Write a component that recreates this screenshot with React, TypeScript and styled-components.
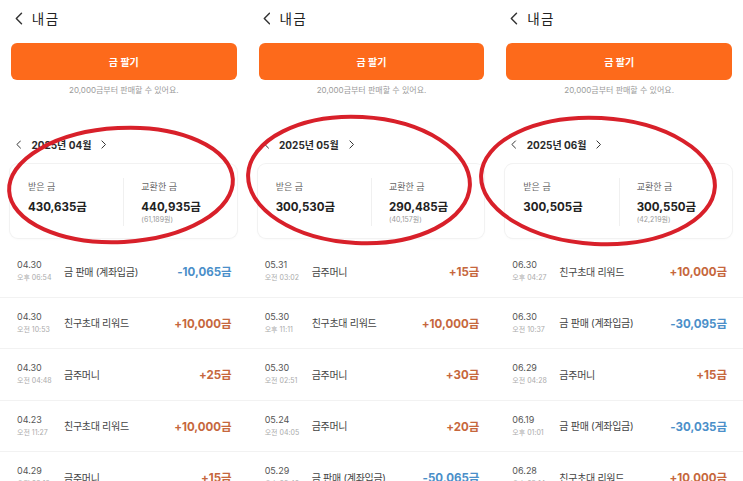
import React from "react";
import styled, { createGlobalStyle } from "styled-components";

const GlobalStyle = createGlobalStyle`
  html, body {
    margin: 0;
    padding: 0;
    background: #fff;
  }
  body {
    font-family: Inter, "Noto Sans CJK KR", sans-serif;
    color: #222;
    overflow: hidden;
  }
`;

// Layout
const Screen = styled.div`
  position: relative;
  width: 743px;
  height: 481px;
  overflow: hidden;
  display: grid;
  grid-template-columns: repeat(3, 1fr);
`;

const Panel = styled.div`
  display: flex;
  flex-direction: column;
  min-width: 0;
`;

const Header = styled.div`
  height: 36px;
  display: flex;
  align-items: center;
  gap: 9px;
  padding-left: 15px;
`;

const Title = styled.span`
  font-size: 13.5px;
  letter-spacing: 1.5px;
  color: #222;
`;

const SellButton = styled.button`
  margin: 7px 11px 0;
  height: 37px;
  border: 0;
  border-radius: 6px;
  background: #fd6a1b;
  color: #fff;
  font-family: inherit;
  font-size: 10px;
  font-weight: 700;
`;

const Hint = styled.div`
  margin-top: 5px;
  line-height: 10px;
  font-size: 8px;
  color: #9b9b9b;
  text-align: center;
`;

const MonthNav = styled.div`
  margin-top: 39px;
  height: 20px;
  display: flex;
  align-items: center;
  padding-left: 16px;
  gap: 10px;
`;

const Month = styled.span`
  font-size: 10px;
  font-weight: 700;
  color: #2a2a2a;
`;

const Card = styled.div`
  margin: 10px 11px 0 10px;
  height: 74px;
  box-sizing: border-box;
  border-radius: 8px;
  background: #fff;
  box-shadow: 0 0 0 1px #f2f2f2, 0 1px 3px rgba(0, 0, 0, 0.04);
  display: flex;
  align-items: flex-start;
  padding-top: 16px;
`;

const Col = styled.div<{ $pad: number }>`
  flex: 1;
  padding-left: ${(p) => p.$pad}px;
  display: flex;
  flex-direction: column;
`;

const Divider = styled.div`
  width: 1px;
  height: 48px;
  margin-top: -2px;
  background: #f0f0f0;
`;

const Label = styled.span`
  font-size: 9px;
  line-height: 14px;
  color: #666;
`;

const Value = styled.span`
  margin-top: 4px;
  font-size: 11.5px;
  line-height: 18px;
  font-weight: 700;
  color: #222;
`;

const Won = styled.span`
  margin-top: -1px;
  font-size: 7px;
  line-height: 10px;
  color: #999;
`;

const List = styled.div`
  margin-top: 8px;
  display: flex;
  flex-direction: column;
`;

const Row = styled.div`
  height: 51.5px;
  flex-shrink: 0;
  box-sizing: border-box;
  border-bottom: 1px solid #f2f2f2;
  display: flex;
  align-items: center;
  padding: 0 16px 0 17px;
`;

const When = styled.div`
  width: 47px;
  display: flex;
  flex-direction: column;
`;

const Day = styled.span`
  font-size: 9px;
  line-height: 13px;
  color: #555;
`;

const Time = styled.span`
  margin-top: 1px;
  font-size: 7px;
  line-height: 12px;
  color: #aaa;
`;

const What = styled.span`
  flex: 1;
  font-size: 10px;
  letter-spacing: -0.3px;
  color: #444;
`;

const Amount = styled.span<{ $minus: boolean }>`
  font-size: 11.5px;
  font-weight: 700;
  color: ${(p) => (p.$minus ? "#4b8fc9" : "#c6673d")};
`;

const Marks = styled.svg`
  position: absolute;
  inset: 0;
  pointer-events: none;
`;

const Chevron = ({ dir, size }: { dir: "l" | "r"; size: number }) => (
  <svg width={size * 0.6} height={size} viewBox="0 0 6 10">
    <polyline
      points={dir === "l" ? "5,1 1,5 5,9" : "1,1 5,5 1,9"}
      fill="none"
      stroke="#333"
      strokeWidth={1.1}
      strokeLinecap="round"
      strokeLinejoin="round"
    />
  </svg>
);

type Tx = { day: string; time: string; what: string; amount: string };

type Sheet = {
  month: string;
  got: string;
  swapped: string;
  won: string;
  rows: Tx[];
};

const sheets: Sheet[] = [
  {
    month: "2025년 04월",
    got: "430,635금",
    swapped: "440,935금",
    won: "(61,189원)",
    rows: [
      { day: "04.30", time: "오후 06:54", what: "금 판매 (계좌입금)", amount: "-10,065금" },
      { day: "04.30", time: "오전 10:53", what: "친구초대 리워드", amount: "+10,000금" },
      { day: "04.30", time: "오전 04:48", what: "금주머니", amount: "+25금" },
      { day: "04.23", time: "오전 11:27", what: "친구초대 리워드", amount: "+10,000금" },
      { day: "04.29", time: "오전 03:12", what: "금주머니", amount: "+15금" },
    ],
  },
  {
    month: "2025년 05월",
    got: "300,530금",
    swapped: "290,485금",
    won: "(40,157원)",
    rows: [
      { day: "05.31", time: "오전 03:02", what: "금주머니", amount: "+15금" },
      { day: "05.30", time: "오후 11:11", what: "친구초대 리워드", amount: "+10,000금" },
      { day: "05.30", time: "오전 02:51", what: "금주머니", amount: "+30금" },
      { day: "05.24", time: "오전 04:05", what: "금주머니", amount: "+20금" },
      { day: "05.29", time: "오후 02:40", what: "금 판매 (계좌입금)", amount: "-50,065금" },
    ],
  },
  {
    month: "2025년 06월",
    got: "300,505금",
    swapped: "300,550금",
    won: "(42,219원)",
    rows: [
      { day: "06.30", time: "오후 04:27", what: "친구초대 리워드", amount: "+10,000금" },
      { day: "06.30", time: "오전 10:37", what: "금 판매 (계좌입금)", amount: "-30,095금" },
      { day: "06.29", time: "오전 04:28", what: "금주머니", amount: "+15금" },
      { day: "06.19", time: "오후 01:01", what: "금 판매 (계좌입금)", amount: "-30,035금" },
      { day: "06.28", time: "오후 09:14", what: "친구초대 리워드", amount: "+10,000금" },
    ],
  },
];

const GoldPanel = ({ sheet }: { sheet: Sheet }) => (
  <Panel>
    <Header>
      <Chevron dir="l" size={13} />
      <Title>내금</Title>
    </Header>
    <SellButton>금 팔기</SellButton>
    <Hint>20,000금부터 판매할 수 있어요.</Hint>
    <MonthNav>
      <Chevron dir="l" size={9} />
      <Month>{sheet.month}</Month>
      <Chevron dir="r" size={9} />
    </MonthNav>
    <Card>
      <Col $pad={18}>
        <Label>받은 금</Label>
        <Value>{sheet.got}</Value>
      </Col>
      <Divider />
      <Col $pad={17}>
        <Label>교환한 금</Label>
        <Value>{sheet.swapped}</Value>
        <Won>{sheet.won}</Won>
      </Col>
    </Card>
    <List>
      {sheet.rows.map((r, i) => (
        <Row key={i}>
          <When>
            <Day>{r.day}</Day>
            <Time>{r.time}</Time>
          </When>
          <What>{r.what}</What>
          <Amount $minus={r.amount.startsWith("-")}>{r.amount}</Amount>
        </Row>
      ))}
    </List>
  </Panel>
);

export default function App() {
  return (
    <>
      <GlobalStyle />
      <Screen>
        {sheets.map((s) => (
          <GoldPanel key={s.month} sheet={s} />
        ))}
        <Marks width={743} height={481} viewBox="0 0 743 481">
          <g fill="none" stroke="#d8202a" strokeWidth={4}>
            <ellipse cx={121} cy={185} rx={112} ry={57} transform="rotate(-3 121 185)" />
            <ellipse cx={359} cy={180} rx={111} ry={63} transform="rotate(3 359 180)" />
            <ellipse cx={598} cy={181} rx={117} ry={63} transform="rotate(3 598 181)" />
          </g>
        </Marks>
      </Screen>
    </>
  );
}
